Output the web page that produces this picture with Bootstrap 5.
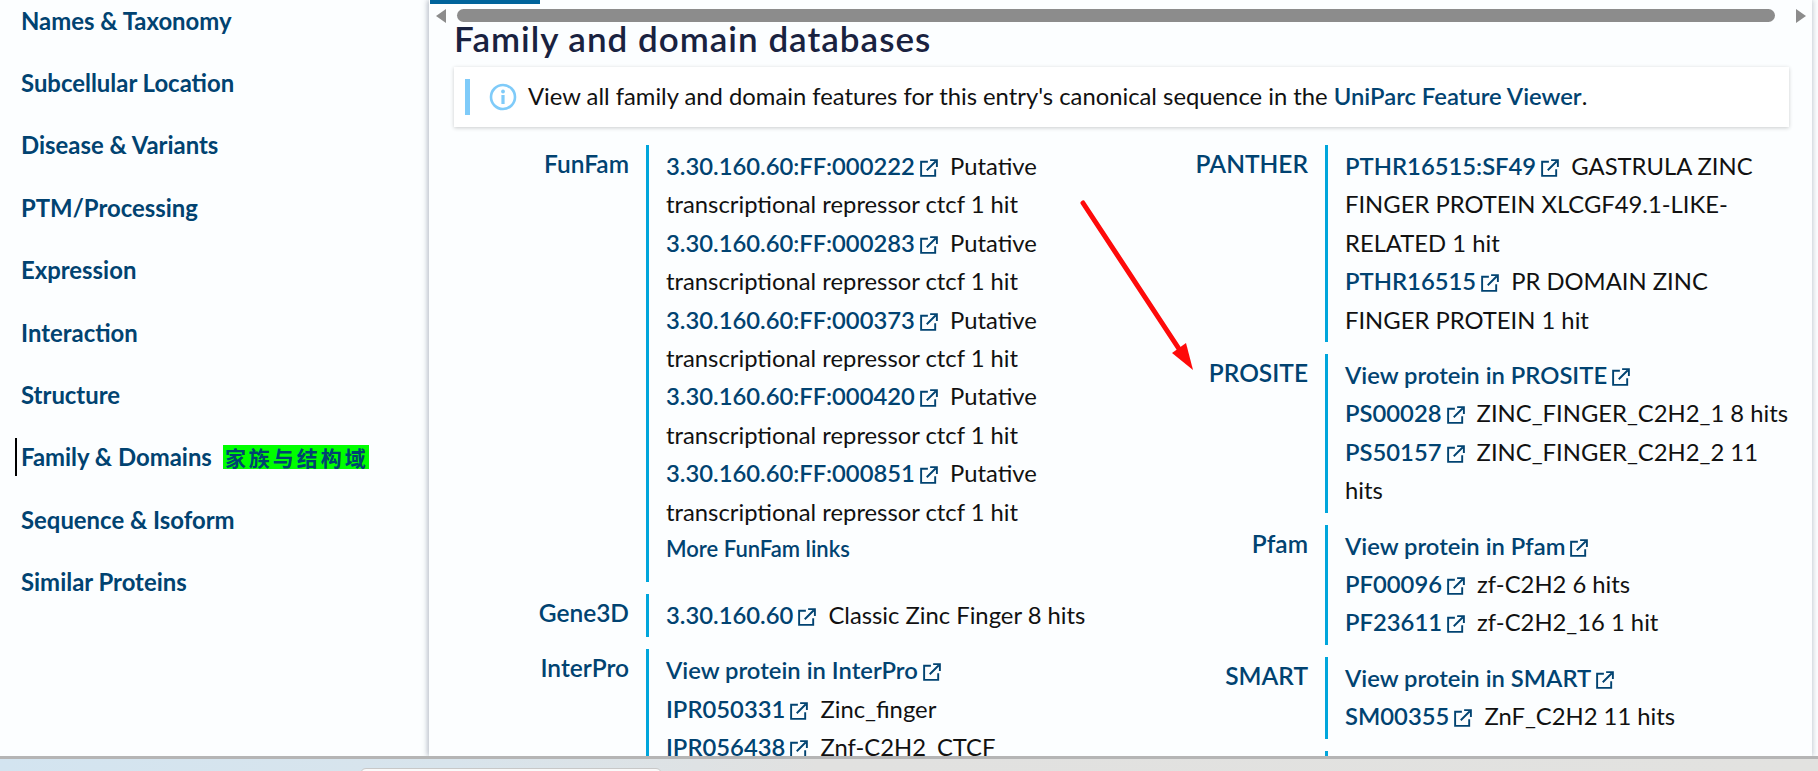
<!DOCTYPE html>
<html lang="en">
<head>
<meta charset="UTF-8">
<title>Family and domain databases</title>
<link href="https://cdn.jsdelivr.net/npm/bootstrap@5.3.0/dist/css/bootstrap.min.css" rel="stylesheet">
<style>
html, body { height: 771px; overflow: hidden; }
body { font-family: Lato, "Liberation Sans", sans-serif; background: #fcfeff; color: #111; font-size: 23.8px; }
a { color: #014371; text-decoration: none; font-weight: 600; }
.shell { height: 756px; overflow: hidden; }
.side-rail { width: 429px; flex: none; margin-top: -10.6px; }
.side-rail a { display: flex; align-items: center; height: 62.4px; padding-left: 21px; font-size: 23.9px; position: relative; font-weight: 700; white-space: nowrap; }
.side-rail a.on::before { content: ""; position: absolute; left: 15px; top: 12px; width: 2px; height: 38px; background: #000; }
.zh-note { background: #00ff00; font-family: "Noto Sans CJK SC", sans-serif; font-weight: 700; font-size: 21px; letter-spacing: 3px; line-height: 24px; height: 24px; margin-left: 11px; padding-left: 2px; }
.panel { width: 1383px; flex: none; box-shadow: -2px 0 5px rgba(90,100,120,.35), 2px 0 5px rgba(90,100,120,.2); position: relative; }
.tab-mark { width: 110px; height: 4px; background: #00639b; margin-left: 1px; }
.fake-scroll { height: 13px; margin-top: 5px; }
.fake-scroll .thumb { position: absolute; left: 28px; width: 1318px; height: 13px; border-radius: 7px; background: #8c8c8c; top: 9px; }
.arr-l { width: 0; height: 0; border: 7px solid transparent; border-right: 10px solid #8c8c8c; border-left: 0; margin-left: 7px; }
.arr-r { width: 0; height: 0; border: 7px solid transparent; border-left: 10px solid #8c8c8c; border-right: 0; margin-left: 1367px; margin-top: -14px; }
.sect-title { font-size: 35px; font-weight: 600; line-height: 36px; letter-spacing: 1px; color: #192240; margin: -2px 0 11px 25px; }
.info-strip { margin-left: 25px; width: 1335px; height: 60px; background: #fff; box-shadow: 0 1px 4px rgba(0,0,0,.2); padding-left: 11px; gap: 11px; }
.info-strip .bar { width: 5px; height: 36px; background: #7fcbf9; }
.db-cols { margin-top: 18px; margin-left: 25px; }
.db-col { width: 679px; flex: none; }
.db-row { display: flex; margin-bottom: 12px; }
.db-name { width: 175px; flex: none; text-align: right; color: #014371; font-weight: 600; font-size: 24.5px; line-height: 38.4px; }
.db-vals { margin-left: 17px; border-left: 3px solid #00a6dc; padding: 2px 0 3px 17px; width: 467px; line-height: 38.4px; }
.more-link { display: block; font-size: 22px; line-height: 36px; margin-bottom: 12px; }
.ext { width: 18px; height: 18px; margin: 0 6px 0 5px; vertical-align: -2px; }
.red-arrow { position: absolute; left: 641px; top: 190px; pointer-events: none; }
.win-strip { height: 15px; border-top: 3px solid #b5b5b5; background: linear-gradient(90deg, #d3e4f0 0, #d8e4ec 25%, #e1e1e0 45%, #e2e2e0 100%); position: relative; overflow: hidden; }
.win-tab { position: absolute; left: 360px; top: 9px; width: 302px; height: 20px; background: #fafafa; border: 1px solid #c8c8c8; border-radius: 6px; }
</style>
</head>
<body>
<svg width="0" height="0" class="position-absolute">
  <symbol id="ext-ico" viewBox="0.5 0.5 16 16">
    <path d="M7.5 3H1.5V15.5H14V9.5" fill="none" stroke="#014371" stroke-width="1.7"/>
    <path d="M6.5 10.5L14.5 2.5M9.5 1.5H15.5V7.5" fill="none" stroke="#014371" stroke-width="1.7"/>
  </symbol>
</svg>

<div class="shell d-flex">
  <nav class="side-rail">
    <a href="#">Names &amp; Taxonomy</a>
    <a href="#">Subcellular Location</a>
    <a href="#">Disease &amp; Variants</a>
    <a href="#">PTM/Processing</a>
    <a href="#">Expression</a>
    <a href="#">Interaction</a>
    <a href="#">Structure</a>
    <a href="#" class="on">Family &amp; Domains <span class="zh-note">家族与结构域</span></a>
    <a href="#">Sequence &amp; Isoform</a>
    <a href="#">Similar Proteins</a>
  </nav>

  <main class="panel">
    <div class="tab-mark"></div>
    <div class="fake-scroll">
      <div class="thumb"></div>
      <div class="arr-l"></div>
      <div class="arr-r"></div>
    </div>
    <h2 class="sect-title">Family and domain databases</h2>
    <div class="info-strip d-flex align-items-center">
      <span class="bar"></span>
      <svg width="28" height="28" viewBox="0 0 28 28" class="ms-2">
        <circle cx="14" cy="14" r="12" fill="none" stroke="#7fcbf9" stroke-width="2.6"/>
        <circle cx="14" cy="8.5" r="1.9" fill="#7fcbf9"/>
        <rect x="12.4" y="12" width="3.2" height="9" fill="#7fcbf9"/>
      </svg>
      <span class="info-copy">View all family and domain features for this entry's canonical sequence in the <a href="#">UniParc Feature Viewer</a>.</span>
    </div>

    <div class="db-cols d-flex">
      <div class="db-col">
        <div class="db-row">
          <div class="db-name">FunFam</div>
          <div class="db-vals">
            <a href="#">3.30.160.60:FF:000222<svg class="ext"><use href="#ext-ico"/></svg></a> Putative transcriptional repressor ctcf 1 hit<br>
            <a href="#">3.30.160.60:FF:000283<svg class="ext"><use href="#ext-ico"/></svg></a> Putative transcriptional repressor ctcf 1 hit<br>
            <a href="#">3.30.160.60:FF:000373<svg class="ext"><use href="#ext-ico"/></svg></a> Putative transcriptional repressor ctcf 1 hit<br>
            <a href="#">3.30.160.60:FF:000420<svg class="ext"><use href="#ext-ico"/></svg></a> Putative transcriptional repressor ctcf 1 hit<br>
            <a href="#">3.30.160.60:FF:000851<svg class="ext"><use href="#ext-ico"/></svg></a> Putative transcriptional repressor ctcf 1 hit
            <a href="#" class="more-link">More FunFam links</a>
          </div>
        </div>
        <div class="db-row">
          <div class="db-name">Gene3D</div>
          <div class="db-vals"><a href="#">3.30.160.60<svg class="ext"><use href="#ext-ico"/></svg></a> Classic Zinc Finger 8 hits</div>
        </div>
        <div class="db-row">
          <div class="db-name">InterPro</div>
          <div class="db-vals">
            <a href="#">View protein in InterPro<svg class="ext"><use href="#ext-ico"/></svg></a><br>
            <a href="#">IPR050331<svg class="ext"><use href="#ext-ico"/></svg></a> Zinc_finger<br>
            <a href="#">IPR056438<svg class="ext"><use href="#ext-ico"/></svg></a> Znf-C2H2_CTCF
          </div>
        </div>
      </div>

      <div class="db-col">
        <div class="db-row">
          <div class="db-name">PANTHER</div>
          <div class="db-vals">
            <a href="#">PTHR16515:SF49<svg class="ext"><use href="#ext-ico"/></svg></a> GASTRULA ZINC FINGER PROTEIN XLCGF49.1-LIKE-RELATED 1 hit<br>
            <a href="#">PTHR16515<svg class="ext"><use href="#ext-ico"/></svg></a> PR DOMAIN ZINC FINGER PROTEIN 1 hit
          </div>
        </div>
        <div class="db-row">
          <div class="db-name">PROSITE</div>
          <div class="db-vals">
            <a href="#">View protein in PROSITE<svg class="ext"><use href="#ext-ico"/></svg></a><br>
            <a href="#">PS00028<svg class="ext"><use href="#ext-ico"/></svg></a> ZINC_FINGER_C2H2_1 8 hits<br>
            <a href="#">PS50157<svg class="ext"><use href="#ext-ico"/></svg></a> ZINC_FINGER_C2H2_2 11 hits
          </div>
        </div>
        <div class="db-row">
          <div class="db-name">Pfam</div>
          <div class="db-vals">
            <a href="#">View protein in Pfam<svg class="ext"><use href="#ext-ico"/></svg></a><br>
            <a href="#">PF00096<svg class="ext"><use href="#ext-ico"/></svg></a> zf-C2H2 6 hits<br>
            <a href="#">PF23611<svg class="ext"><use href="#ext-ico"/></svg></a> zf-C2H2_16 1 hit
          </div>
        </div>
        <div class="db-row">
          <div class="db-name">SMART</div>
          <div class="db-vals">
            <a href="#">View protein in SMART<svg class="ext"><use href="#ext-ico"/></svg></a><br>
            <a href="#">SM00355<svg class="ext"><use href="#ext-ico"/></svg></a> ZnF_C2H2 11 hits
          </div>
        </div>
        <div class="db-row">
          <div class="db-name"></div>
          <div class="db-vals">&nbsp;</div>
        </div>
      </div>
    </div>

    <svg class="red-arrow" width="140" height="190" viewBox="1070 190 140 190">
      <path d="M1083 203L1185 358" stroke="#fe0a0a" stroke-width="5" stroke-linecap="round" fill="none"/>
      <path d="M1193 370L1172 353L1186 343Z" fill="#fe0a0a"/>
    </svg>
  </main>
</div>
<div class="win-strip"><div class="win-tab"></div></div>
<script src="https://cdn.jsdelivr.net/npm/bootstrap@5.3.0/dist/js/bootstrap.bundle.min.js"></script>
</body>
</html>
